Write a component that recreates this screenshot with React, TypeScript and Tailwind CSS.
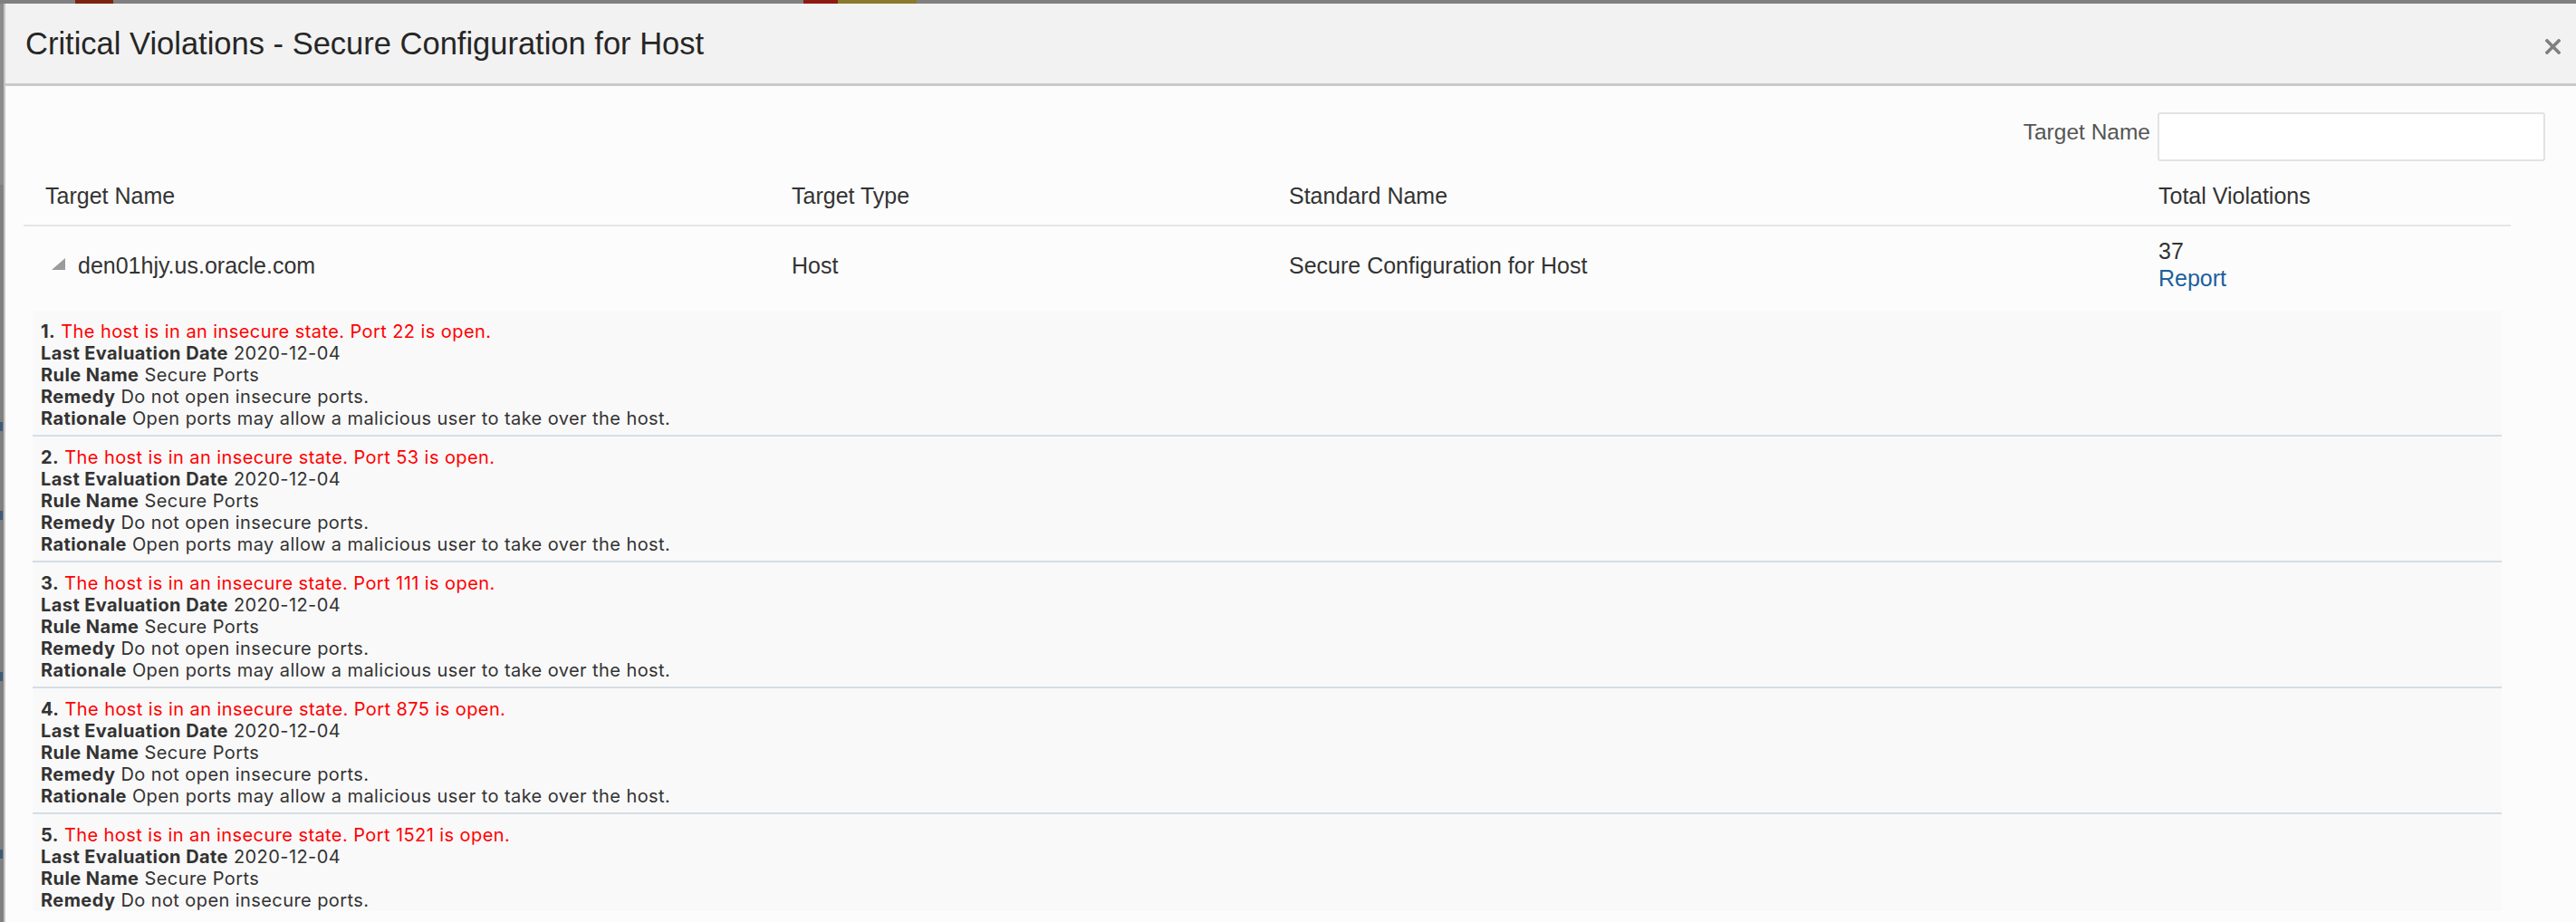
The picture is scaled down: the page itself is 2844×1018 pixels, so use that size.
import React from "react";

const ports = [22, 53, 111, 875, 1521];

function Violation({ n, port, last }: { n: number; port: number; last?: boolean }) {
  return (
    <div className="pl-[9px] pt-[11px] pb-[6px] border-b-2 border-[#d6dde5] text-[20px] leading-[24px] tracking-[0.42px] text-[#333333]">
      <div>
        <span className="font-bold">{n}.</span>{" "}
        <span className="text-[#ff0000]">The host is in an insecure state. Port {port} is open.</span>
      </div>
      <div>
        <span className="font-bold">Last Evaluation Date</span> 2020-12-04
      </div>
      <div>
        <span className="font-bold">Rule Name</span> Secure Ports
      </div>
      <div>
        <span className="font-bold">Remedy</span> Do not open insecure ports.
      </div>
      {!last && (
        <div>
          <span className="font-bold">Rationale</span> Open ports may allow a malicious user to take over the host.
        </div>
      )}
    </div>
  );
}

export default function App() {
  return (
    <div className="w-[2844px] h-[1018px] overflow-hidden bg-[#808080] flex flex-col font-['Liberation_Sans',Arial,sans-serif]">
      {/* underlying page peeking through top */}
      <div className="h-[4px] flex shrink-0">
        <div className="ml-[83px] w-[42px] bg-[#7a2410]" />
        <div className="ml-[762px] w-[38px] bg-[#8e1a12]" />
        <div className="w-[87px] bg-[#8a7a2c]" />
      </div>
      <div className="flex flex-1 min-h-0">
        {/* left strip of underlying page */}
        <div className="w-[4px] shrink-0 flex flex-col">
          <div className="h-[200px] bg-[#8c8c8c]" />
          <div className="h-[262px]" />
          <div className="h-[10px] w-[3px] bg-[#3d5a78]" />
          <div className="h-[88px]" />
          <div className="h-[10px] w-[3px] bg-[#3d5a78]" />
          <div className="h-[168px]" />
          <div className="h-[10px] w-[3px] bg-[#3d5a78]" />
          <div className="h-[186px]" />
          <div className="h-[10px] w-[3px] bg-[#3d5a78]" />
        </div>
        {/* modal */}
        <div className="flex-1 flex flex-col border-l-2 border-[#c6c6c6] bg-[#fcfcfc] min-w-0">
          <div className="h-[91px] shrink-0 flex items-center justify-between pl-[22px] pr-[17px] bg-[#f2f2f2] border-b-[3px] border-[#cacaca]">
            <div className="text-[34.5px] leading-none text-[#262626]">
              Critical Violations - Secure Configuration for Host
            </div>
            <svg width="17" height="17" viewBox="0 0 17 17" className="mt-[6px]">
              <path d="M2 2 L15 15 M15 2 L2 15" stroke="#808080" strokeWidth="3.6" strokeLinecap="square" />
            </svg>
          </div>

          <div className="flex-1 flex flex-col min-h-0">
            {/* filter */}
            <div className="flex justify-end items-start mt-[29px] pr-[34px] gap-[8px] shrink-0">
              <div className="text-[24.5px] leading-[28px] mt-[8px] text-[#555555]">Target Name</div>
              <div className="w-[428px] h-[54px] border-2 border-[#e3e3e3] rounded-[3px] bg-white" />
            </div>

            {/* table */}
            <div className="ml-[20px] w-[2746px] shrink-0 text-[25px] text-[#333333]">
              <div className="grid grid-cols-[848px_549px_960px_1fr] pt-[24px] pb-[18px] leading-[28px] border-b-2 border-[#e6e6e6]">
                <div className="pl-[24px]">Target Name</div>
                <div>Target Type</div>
                <div>Standard Name</div>
                <div>Total Violations</div>
              </div>
              <div className="grid grid-cols-[848px_549px_960px_1fr] h-[93px]">
                <div className="pl-[31px] pt-[29px] leading-[28px] flex items-start gap-[14px]">
                  <svg width="15" height="13" viewBox="0 0 15 13" className="mt-[6px] shrink-0">
                    <polygon points="15,0 15,13 0,13" fill="#9b9b9b" />
                  </svg>
                  <span>den01hjy.us.oracle.com</span>
                </div>
                <div className="pt-[29px] leading-[28px]">Host</div>
                <div className="pt-[29px] leading-[28px]">Secure Configuration for Host</div>
                <div className="pt-[12px] leading-[30px] flex flex-col">
                  <span>37</span>
                  <span className="text-[#1b5f9c]">Report</span>
                </div>
              </div>
            </div>

            {/* violations list */}
            <div className="ml-[30px] w-[2726px] h-[663px] shrink-0 overflow-hidden bg-[#f9f9f9] font-['Inter',sans-serif]">
              {ports.map((p, i) => (
                <Violation key={p} n={i + 1} port={p} last={i === ports.length - 1} />
              ))}
            </div>
          </div>
        </div>
      </div>
    </div>
  );
}
